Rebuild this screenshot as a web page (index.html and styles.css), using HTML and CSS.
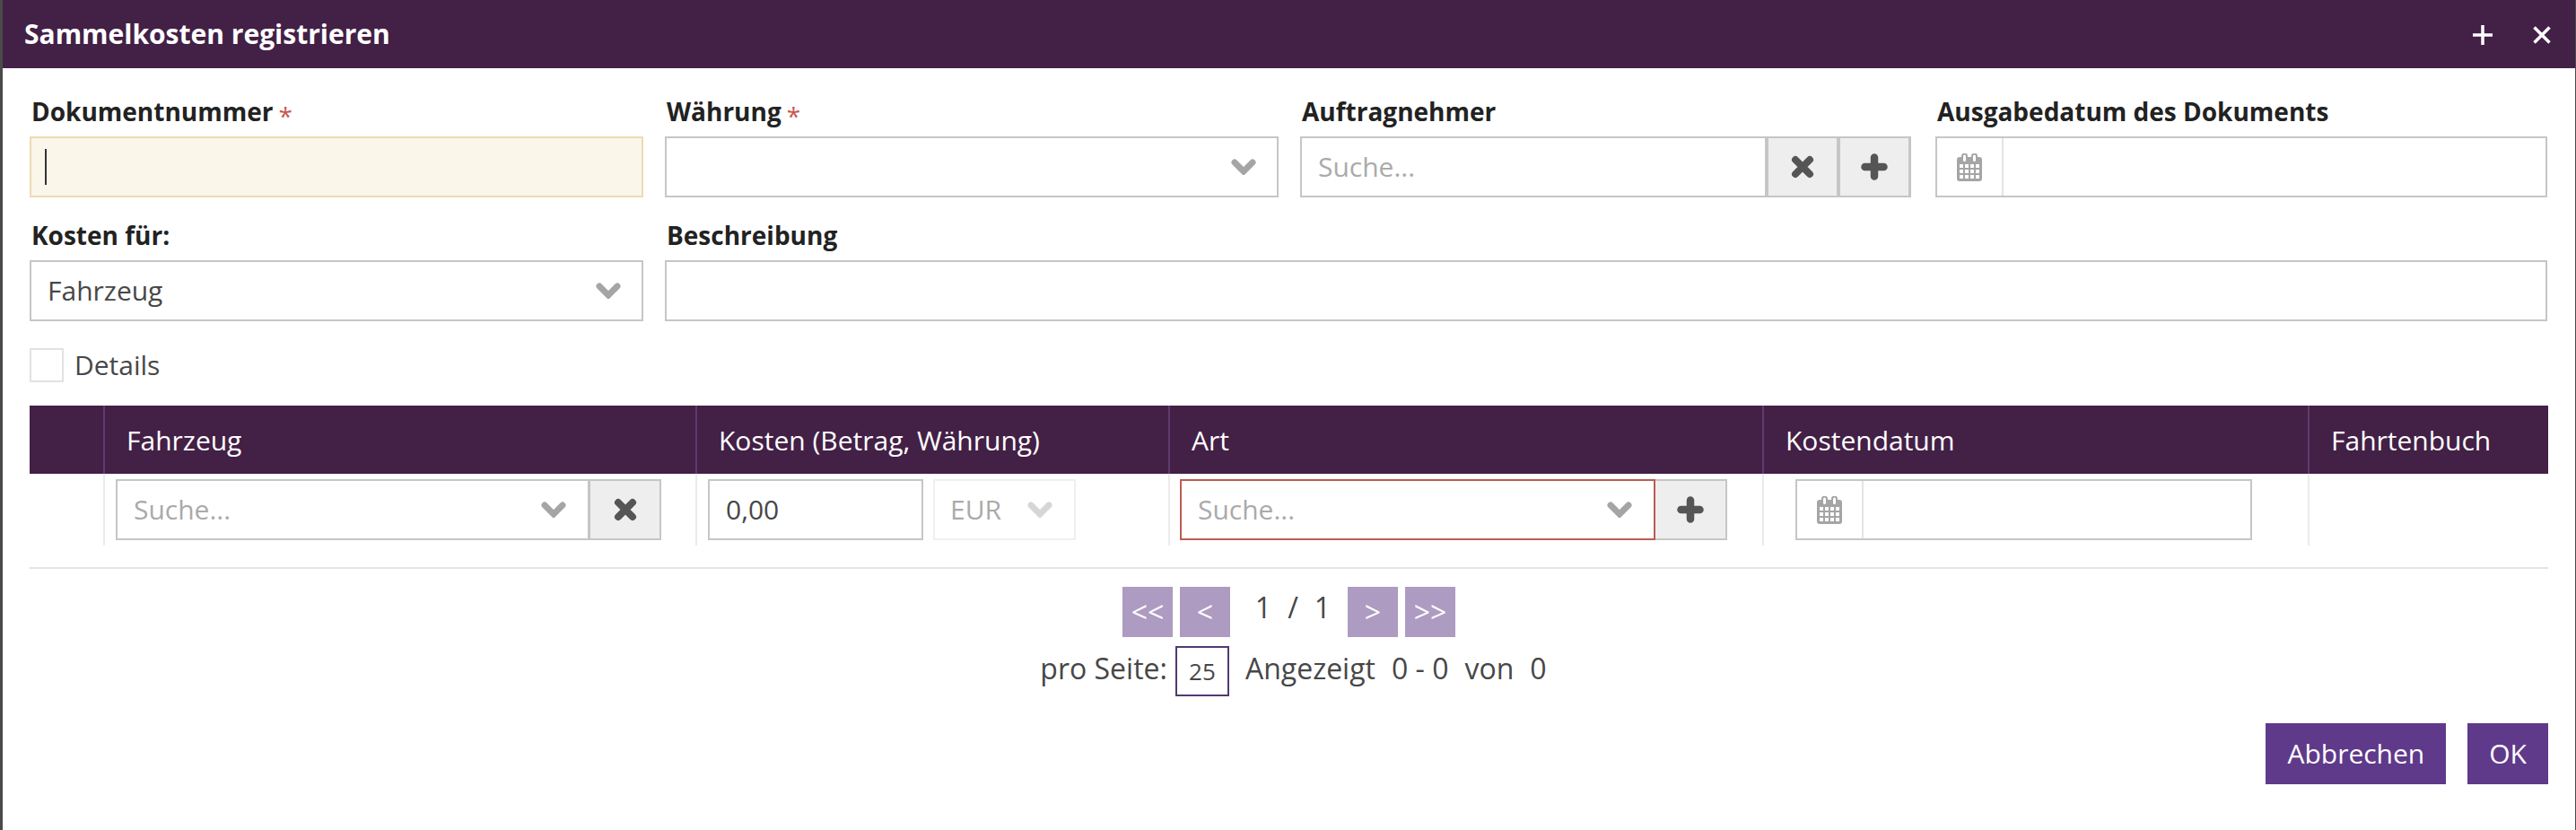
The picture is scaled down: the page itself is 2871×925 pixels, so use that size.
FILE: index.html
```html
<!DOCTYPE html>
<html lang="de">
<head>
<meta charset="utf-8">
<title>Sammelkosten registrieren</title>
<link rel="stylesheet" href="styles.css">
</head>
<body>
<svg class="defs" aria-hidden="true">
  <symbol id="i-x" viewBox="0 0 26 26"><path d="M5 5 21 21M21 5 5 21" fill="none" stroke="currentColor" stroke-width="8" stroke-linecap="round"/></symbol>
  <symbol id="i-plus" viewBox="0 0 30 30"><path d="M15 4.500V25.500M4.500 15H25.500" fill="none" stroke="currentColor" stroke-width="8.500" stroke-linecap="round"/></symbol>
  <symbol id="i-chev" viewBox="0 0 28 18"><path d="M4 4 14 14 24 4" fill="none" stroke="currentColor" stroke-width="7" stroke-linecap="round" stroke-linejoin="miter"/></symbol>
  <symbol id="i-cal" viewBox="0 0 28 31">
    <path fill-rule="evenodd" fill="currentColor" d="M3 4H5V3A3.500 3.500 0 0 1 12 3V4H16V3A3.500 3.500 0 0 1 23 3V4H25A3 3 0 0 1 28 7V28A3 3 0 0 1 25 31H3A3 3 0 0 1 0 28V7A3 3 0 0 1 3 4ZM7 3V7.500A1.500 1.500 0 0 0 10 7.500V3A1.500 1.500 0 0 0 7 3ZM18 3V7.500A1.500 1.500 0 0 0 21 7.500V3A1.500 1.500 0 0 0 18 3ZM3 12V16H7V12ZM9 12V16H13V12ZM15 12V16H19V12ZM21 12V16H25V12ZM3 18V22H7V18ZM9 18V22H13V18ZM15 18V22H19V18ZM21 18V22H25V18ZM3 24V28H7V24ZM9 24V28H13V24ZM15 24V28H19V24ZM21 24V28H25V24Z"/>
  </symbol>
  <symbol id="i-hplus" viewBox="0 0 22 22"><path d="M11 0V22M0 11H22" fill="none" stroke="currentColor" stroke-width="3.500"/></symbol>
  <symbol id="i-hx" viewBox="0 0 20 20"><path d="M1.500 1.500 18.500 18.500M18.500 1.500 1.500 18.500" fill="none" stroke="currentColor" stroke-width="3.500"/></symbol>
</svg>

<main class="modal">
  <header class="modal-head">
    <h1 class="modal-title">Sammelkosten registrieren</h1>
    <div class="modal-tools">
      <svg class="ic-hplus"><use href="#i-hplus"/></svg>
      <svg class="ic-hx"><use href="#i-hx"/></svg>
    </div>
  </header>

  <div class="modal-body">
    <section class="form-grid">
      <div class="field">
        <label class="label">Dokumentnummer<span class="req">*</span></label>
        <div class="box box-focus"><span class="caret"></span></div>
      </div>
      <div class="field">
        <label class="label">Währung<span class="req">*</span></label>
        <div class="box"><span class="box-text"></span><svg class="ic-chev"><use href="#i-chev"/></svg></div>
      </div>
      <div class="field">
        <label class="label">Auftragnehmer</label>
        <div class="group group-short">
          <div class="box box-grow"><span class="box-text ph">Suche...</span></div>
          <button class="addon addon-mid"><svg class="ic-x"><use href="#i-x"/></svg></button>
          <button class="addon addon-end"><svg class="ic-plus"><use href="#i-plus"/></svg></button>
        </div>
      </div>
      <div class="field">
        <label class="label">Ausgabedatum des Dokuments</label>
        <div class="box box-date">
          <span class="cal-cell"><svg class="ic-cal"><use href="#i-cal"/></svg></span>
        </div>
      </div>
      <div class="field">
        <label class="label">Kosten für:</label>
        <div class="box"><span class="box-text">Fahrzeug</span><svg class="ic-chev"><use href="#i-chev"/></svg></div>
      </div>
      <div class="field field-wide">
        <label class="label">Beschreibung</label>
        <div class="box"></div>
      </div>
    </section>

    <div class="check-row">
      <span class="check"></span>
      <span class="check-label">Details</span>
    </div>

    <table class="grid">
      <colgroup>
        <col class="c-sel"><col class="c-veh"><col class="c-cost"><col class="c-art"><col class="c-date"><col class="c-log">
      </colgroup>
      <thead>
        <tr>
          <th></th>
          <th>Fahrzeug</th>
          <th>Kosten (Betrag, Währung)</th>
          <th>Art</th>
          <th>Kostendatum</th>
          <th>Fahrtenbuch</th>
        </tr>
      </thead>
      <tbody>
        <tr>
          <td></td>
          <td>
            <div class="group">
              <div class="box box-veh"><span class="box-text ph">Suche...</span><svg class="ic-chev"><use href="#i-chev"/></svg></div>
              <button class="addon addon-row"><svg class="ic-x"><use href="#i-x"/></svg></button>
            </div>
          </td>
          <td>
            <div class="cost">
              <div class="box box-amount"><span class="box-text">0,00</span></div>
              <div class="box box-cur"><span class="box-text dim">EUR</span><svg class="ic-chev ic-dim"><use href="#i-chev"/></svg></div>
            </div>
          </td>
          <td class="td-art">
            <div class="group">
              <div class="box box-art"><span class="box-text ph">Suche...</span><svg class="ic-chev"><use href="#i-chev"/></svg></div>
              <button class="addon addon-row"><svg class="ic-plus"><use href="#i-plus"/></svg></button>
            </div>
          </td>
          <td>
            <div class="box box-date box-rowdate">
              <span class="cal-cell"><svg class="ic-cal"><use href="#i-cal"/></svg></span>
            </div>
          </td>
          <td></td>
        </tr>
      </tbody>
    </table>

    <hr class="rule">

    <nav class="pager">
      <button class="page-btn">&lt;&lt;</button>
      <button class="page-btn">&lt;</button>
      <span class="page-now"><span>1</span><span>/</span><span>1</span></span>
      <button class="page-btn">&gt;</button>
      <button class="page-btn">&gt;&gt;</button>
    </nav>

    <div class="perpage">
      <span class="pp-label">pro Seite:</span>
      <span class="pp-box">25</span>
      <span>Angezeigt</span>
      <span>0 - 0</span>
      <span>von</span>
      <span>0</span>
    </div>

    <footer class="actions">
      <button class="btn">Abbrechen</button>
      <button class="btn">OK</button>
    </footer>
  </div>
</main>
</body>
</html>
```

FILE: styles.css
```css
* { box-sizing: border-box; }

html, body { height: 100%; }

body {
  margin: 0;
  padding: 0 1px 0 3px;
  background: #4a4a4a;
  font-family: "Open Sans", "Noto Sans", sans-serif;
  font-size: 30px;
  color: #474747;
  overflow: hidden;
}

.defs { display: none; }

.modal {
  height: 100%;
  background: #fff;
}

.modal-head {
  height: 76px;
  padding: 0 27px 0 24px;
  display: flex;
  align-items: center;
  justify-content: space-between;
  background: #432046;
  color: #fff;
}

.modal-title {
  margin: 0;
  font-size: 30px;
  font-weight: 700;
  line-height: 1;
}

.modal-tools {
  display: flex;
  align-items: center;
  gap: 45px;
  padding-top: 2px;
}

.ic-hplus { width: 22px; height: 22px; display: block; }
.ic-hx { width: 20px; height: 20px; display: block; }

.modal-body { padding: 30px 30px 0; }

.form-grid {
  display: grid;
  grid-template-columns: 684px 684px 684px 1fr;
  gap: 24px;
  padding-right: 1px;
}

.field-wide { grid-column: span 3; }

.label {
  display: block;
  height: 46px;
  padding-left: 2px;
  font-size: 28px;
  font-weight: 700;
  line-height: 36px;
  color: #222;
}

.req {
  margin-left: 6px;
  font-size: 28px;
  font-weight: 400;
  vertical-align: -5px;
  color: #c9584e;
}

.box {
  height: 68px;
  display: flex;
  align-items: center;
  justify-content: space-between;
  padding: 0 23px 0 18px;
  background: #fff;
  border: 2px solid #c6c6c6;
}

.box-focus {
  background: #faf6ea;
  border-color: #ecdcb4;
  padding-left: 15px;
}

.caret {
  display: block;
  width: 2px;
  height: 40px;
  background: #333;
}

.box-text { line-height: 1; white-space: nowrap; }
.ph { color: #aaa; }
.dim { color: #aaa; }

.ic-chev { width: 28px; height: 18px; flex: none; display: block; color: #a5a5a5; }
.ic-dim { color: #d6d6d6; }
.ic-x { width: 26px; height: 26px; display: block; color: #555; }
.ic-plus { width: 30px; height: 30px; display: block; color: #555; }
.ic-cal { width: 28px; height: 31px; display: block; color: #a5a5a5; }

.group { display: flex; height: 68px; }
.group-short { width: 681px; }
.box-grow { flex: 1; border-right-width: 4px; }

.addon {
  flex: none;
  width: 80px;
  height: 68px;
  padding: 0;
  display: flex;
  align-items: center;
  justify-content: center;
  background: #eee;
  border: 2px solid #c6c6c6;
  border-left-width: 0;
  border-radius: 0;
}

.addon-mid { border-right-width: 4px; }
.addon-end { width: 79px; border-right-width: 3px; }

.box-date { padding: 0; justify-content: flex-start; }

.cal-cell {
  width: 74px;
  height: 100%;
  display: flex;
  align-items: center;
  justify-content: center;
  border-right: 2px solid #e4e4e4;
}

.check-row {
  margin-top: 30px;
  height: 38px;
  display: flex;
  align-items: center;
  gap: 12px;
}

.check {
  width: 38px;
  height: 38px;
  background: #fff;
  border: 2px solid #e2e2e2;
}

.check-label { line-height: 1; }

.grid {
  width: 100%;
  margin-top: 26px;
  table-layout: fixed;
  border-collapse: separate;
  border-spacing: 0;
}

.c-sel { width: 82px; }
.c-veh { width: 660px; }
.c-cost { width: 527px; }
.c-art { width: 662px; }
.c-date { width: 608px; }
.c-log { width: 268px; }

.grid th {
  height: 76px;
  padding: 0 0 0 24px;
  background: #432046;
  border-left: 2px solid #5f3a70;
  color: #fff;
  font-weight: 400;
  font-size: 30px;
  text-align: left;
  white-space: nowrap;
}

.grid td {
  height: 80px;
  padding: 6px 12px;
  border-left: 2px solid #ebebeb;
  vertical-align: top;
}

.grid .td-art { padding-left: 11px; }

.grid th:first-child,
.grid td:first-child { border-left: 0; }

.box-veh { width: 529px; padding-right: 24px; border-right-width: 3px; }
.box-veh + .addon-row { width: 79px; }
.box-art { width: 530px; padding-right: 24px; border-color: #bd5b52; }

.cost { display: flex; gap: 11px; }
.box-amount { width: 240px; }
.box-cur { width: 159px; border-color: #efefef; padding: 0 24px 0 17px; }

.box-rowdate { width: 509px; margin-left: 23px; }

.rule {
  height: 2px;
  margin: 24px 0 0;
  border: 0;
  background: #e4e4e4;
}

.pager {
  margin-top: 20px;
  display: flex;
  justify-content: center;
  align-items: flex-start;
  gap: 8px;
}

.page-btn {
  width: 56px;
  height: 56px;
  padding: 0;
  background: #ad9bc2;
  border: 0;
  border-radius: 0;
  color: #fff;
  font-family: inherit;
  font-size: 32px;
  line-height: 1;
}

.page-now {
  width: 115px;
  height: 46px;
  padding-left: 9px;
  display: flex;
  justify-content: center;
  align-items: center;
  gap: 18px;
  font-size: 32px;
  line-height: 1;
}

.perpage {
  margin-top: 10px;
  height: 56px;
  display: flex;
  justify-content: center;
  align-items: center;
  gap: 18px;
  padding-left: 10px;
  padding-bottom: 7px;
  font-size: 32px;
  line-height: 1;
}

.pp-box {
  width: 60px;
  height: 56px;
  margin-left: -9px;
  margin-bottom: -7px;
  display: flex;
  align-items: center;
  justify-content: center;
  border: 2px solid #4f3a73;
  font-size: 26px;
}

.actions {
  margin-top: 30px;
  display: flex;
  justify-content: flex-end;
  gap: 24px;
}

.btn {
  height: 68px;
  padding: 0 24px;
  background: #5f3a8a;
  border: 0;
  border-radius: 0;
  color: #fff;
  font-family: inherit;
  font-size: 30px;
  line-height: 1;
}
```
